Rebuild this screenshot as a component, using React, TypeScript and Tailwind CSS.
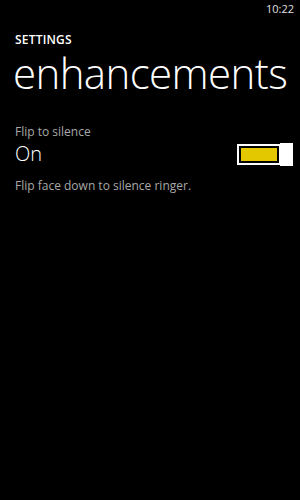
import React from "react";

export default function App() {
  return (
    <div className="w-[300px] h-[500px] bg-black text-white overflow-hidden" style={{ fontFamily: '"Open Sans", "Noto Sans", sans-serif' }}>
      <div className="flex justify-end pr-[6px] pt-[2px] h-[20px] text-[11px] leading-[14px] text-[#e0e0e0]">10:22</div>
      <div className="pl-[15px] pt-[12px] text-[12px] leading-[16px] font-semibold tracking-[0.2px]">SETTINGS</div>
      <div className="pl-[13px] text-[42px] leading-[50px] font-light tracking-[-0.6px] whitespace-nowrap">enhancements</div>
      <div className="pl-[15px] pt-[26px] pr-[7px]">
        <div className="text-[12px] leading-[16px] text-[#a8a8a8]">Flip to silence</div>
        <div className="flex items-center justify-between">
          <div className="text-[20px] leading-[28px] font-light">On</div>
          <div className="flex items-center">
            <div className="w-[44px] h-[21px] border-2 border-white p-[2px] -mr-[1px]">
              <div className="w-full h-full bg-[#e3c800]"></div>
            </div>
            <div className="w-[13px] h-[23px] bg-white"></div>
          </div>
        </div>
        <div className="pt-[10px] text-[12px] leading-[16px] text-[#a8a8a8]">Flip face down to silence ringer.</div>
      </div>
    </div>
  );
}
